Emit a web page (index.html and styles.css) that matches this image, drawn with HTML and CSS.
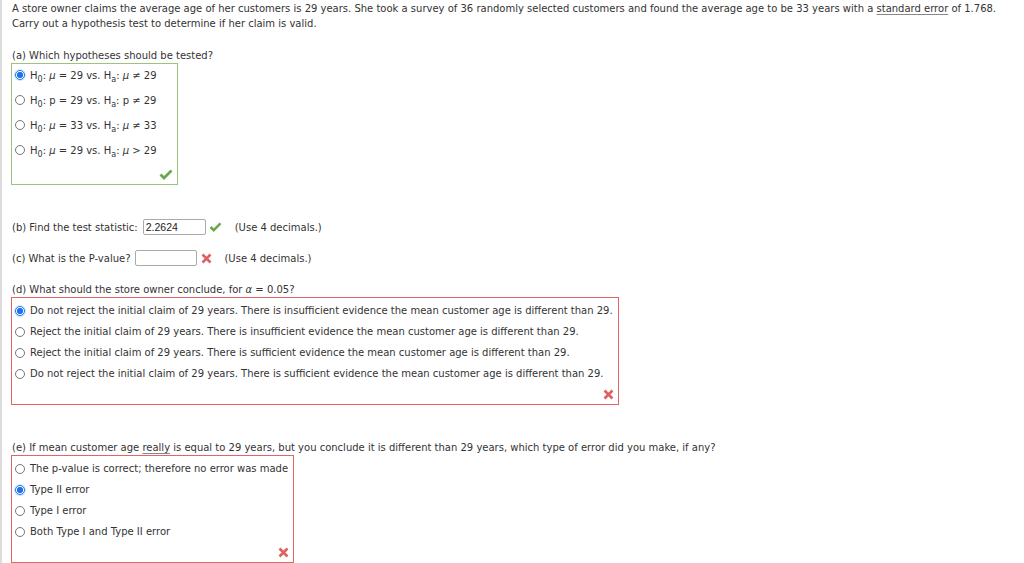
FILE: index.html
```
<!DOCTYPE html>
<html lang="en">

<head>
    <meta charset="UTF-8">
    <title>Hypothesis test</title>
    <link rel="stylesheet" href="styles.css">
</head>

<body>
    <div class="page">
        <p class="intro">
            A store owner claims the average age of her customers is 29 years. She took a survey of 36 randomly selected customers and found the average age to be 33 years with a <span class="term">standard error</span> of 1.768.<br>
            Carry out a hypothesis test to determine if her claim is valid.
        </p>

        <!-- part a -->
        <div class="part part-a">
            <div class="label">(a) Which hypotheses should be tested?</div>
            <div class="choices correct">
                <label class="choice"><span class="radio on"></span><span>H<sub>0</sub>: <i>μ</i> = 29 vs. H<sub>a</sub>: <i>μ</i> ≠ 29</span></label>
                <label class="choice"><span class="radio"></span><span>H<sub>0</sub>: p = 29 vs. H<sub>a</sub>: p ≠ 29</span></label>
                <label class="choice"><span class="radio"></span><span>H<sub>0</sub>: <i>μ</i> = 33 vs. H<sub>a</sub>: <i>μ</i> ≠ 33</span></label>
                <label class="choice"><span class="radio"></span><span>H<sub>0</sub>: <i>μ</i> = 29 vs. H<sub>a</sub>: <i>μ</i> &gt; 29</span></label>
                <div class="mark"><svg width="14" height="11" viewBox="0 0 14 11"><path d="M1.5 5.5 L5 9 L12.5 1.5" fill="none" stroke="#6aa84f" stroke-width="2.8"/></svg></div>
            </div>
        </div>

        <!-- part b, c -->
        <div class="line b-line">
            <span>(b) Find the test statistic:</span>
            <span class="field stat">2.2624</span>
            <svg width="13" height="10" viewBox="0 0 14 11"><path d="M1.5 5.5 L5 9 L12.5 1.5" fill="none" stroke="#6aa84f" stroke-width="2.8"/></svg>
            <span class="hint">(Use 4 decimals.)</span>
        </div>
        <div class="line c-line">
            <span>(c) What is the P-value?</span>
            <span class="field pval"></span>
            <svg width="11" height="11" viewBox="0 0 11 11"><path d="M1.5 1.5 L9.5 9.5 M9.5 1.5 L1.5 9.5" stroke="#e06060" stroke-width="2.6"/></svg>
            <span class="hint">(Use 4 decimals.)</span>
        </div>

        <!-- part d -->
        <div class="part part-d">
            <div class="label">(d) What should the store owner conclude, for <i>α</i> = 0.05?</div>
            <div class="choices wrong">
                <label class="choice"><span class="radio on"></span><span>Do not reject the initial claim of 29 years. There is insufficient evidence the mean customer age is different than 29.</span></label>
                <label class="choice"><span class="radio"></span><span>Reject the initial claim of 29 years. There is insufficient evidence the mean customer age is different than 29.</span></label>
                <label class="choice"><span class="radio"></span><span>Reject the initial claim of 29 years. There is sufficient evidence the mean customer age is different than 29.</span></label>
                <label class="choice"><span class="radio"></span><span>Do not reject the initial claim of 29 years. There is sufficient evidence the mean customer age is different than 29.</span></label>
                <div class="mark"><svg width="11" height="11" viewBox="0 0 11 11"><path d="M1.5 1.5 L9.5 9.5 M9.5 1.5 L1.5 9.5" stroke="#e06060" stroke-width="2.6"/></svg></div>
            </div>
        </div>

        <!-- part e -->
        <div class="part part-e">
            <div class="label">(e) If mean customer age <span class="term">really</span> is equal to 29 years, but you conclude it is different than 29 years, which type of error did you make, if any?</div>
            <div class="choices wrong">
                <label class="choice"><span class="radio"></span><span>The p-value is correct; therefore no error was made</span></label>
                <label class="choice"><span class="radio on"></span><span>Type II error</span></label>
                <label class="choice"><span class="radio"></span><span>Type I error</span></label>
                <label class="choice"><span class="radio"></span><span>Both Type I and Type II error</span></label>
                <div class="mark"><svg width="11" height="11" viewBox="0 0 11 11"><path d="M1.5 1.5 L9.5 9.5 M9.5 1.5 L1.5 9.5" stroke="#e06060" stroke-width="2.6"/></svg></div>
            </div>
        </div>
    </div>
</body>

</html>
```

FILE: styles.css
```
body {
    margin: 0;
    padding: 0;
    background: #fff;
    color: #333;
    font-family: 'DejaVu Sans', Verdana, sans-serif;
    font-size: 10px;
    line-height: 15px;
}

.page {
    border-left: 2px solid #dcdcdc;
    padding: 1px 0 0 9px;
    height: 563px;
    box-sizing: border-box;
    overflow: hidden;
}

.intro {
    margin: 0 0 17px;
    padding-left: 1px;
    white-space: nowrap;
}

.term {
    text-decoration: underline;
    text-decoration-color: #888;
    text-underline-offset: 2px;
}

.label {
    padding-left: 1px;
}

/* answer boxes */
.choices {
    display: inline-flex;
    flex-direction: column;
    padding: 2px 5px 0 3px;
}

.choices.correct {
    border: 1px solid #9cc47c;
    width: 157px;
    padding-top: 0;
    gap: 3px;
}

.choices.correct .choice {
    height: 22px;
}

.choices.wrong {
    border: 1px solid #e06666;
}

.choice {
    display: flex;
    align-items: center;
    height: 21px;
    white-space: nowrap;
}

.choice sub {
    font-size: 8px;
    line-height: 0;
    vertical-align: -3px;
}

.radio {
    width: 8px;
    height: 8px;
    border: 1px solid #777;
    border-radius: 50%;
    margin-right: 5px;
    flex: none;
    background: #fff;
}

.radio.on {
    border-color: #1a73e8;
    background: radial-gradient(circle, #1a73e8 0 2.8px, #fff 3.4px);
    box-shadow: 0 0 0 1px rgba(26, 115, 232, 0.2);
}

.mark {
    display: flex;
    justify-content: flex-end;
    align-items: center;
    height: 20px;
    margin-right: -1px;
}

/* b and c */
.line {
    display: flex;
    align-items: center;
    height: 16px;
    padding-left: 1px;
}

.b-line {
    margin-top: 34px;
}

.c-line {
    margin-top: 15px;
}

.field {
    display: inline-block;
    height: 16px;
    border: 1px solid #aaa;
    border-radius: 2px;
    box-sizing: border-box;
    margin-left: 5px;
    font-family: 'Liberation Sans', Arial, sans-serif;
    font-size: 10.5px;
    line-height: 14px;
    padding-left: 2px;
    color: #222;
}

.stat {
    width: 63px;
}

.pval {
    width: 62px;
}

.line svg {
    margin-left: 3px;
}

.hint {
    margin-left: 13px;
}

.c-line svg {
    margin-left: 4px;
}

.c-line .hint {
    margin-left: 12px;
}

.part-d {
    margin-top: 16px;
}

.part-e {
    margin-top: 35px;
}
```
